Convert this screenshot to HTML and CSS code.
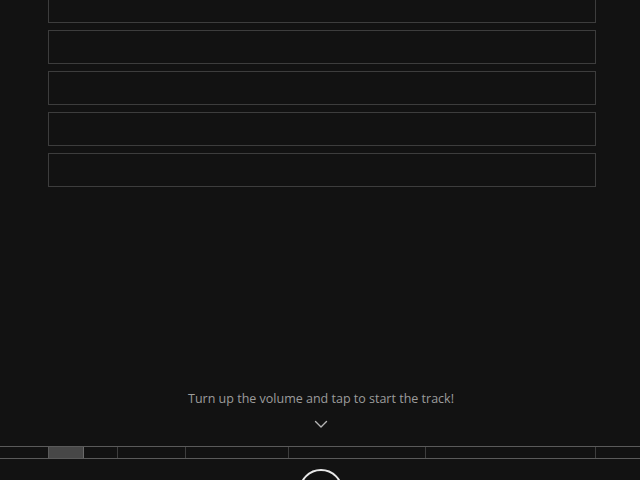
FILE: index.html
```html
<!DOCTYPE html>
<html lang="en">
<head>
<meta charset="utf-8">
<title>Track</title>
<link rel="stylesheet" href="styles.css">
</head>
<body>
<div class="screen">
  <div class="rows">
    <div class="row"></div>
    <div class="row"></div>
    <div class="row"></div>
    <div class="row"></div>
    <div class="row"></div>
  </div>
  <p class="prompt">Turn up the volume and tap to start the track!</p>
  <div class="chevron">
    <svg width="14" height="9" viewBox="0 0 14 9"><path d="M1.5 1.5 L7 7 L12.5 1.5" fill="none" stroke="#b5b5b5" stroke-width="1.4" stroke-linecap="round" stroke-linejoin="round"/></svg>
  </div>
  <div class="timeline">
    <div class="seg first" style="width:48px"></div>
    <div class="seg active" style="width:35px"></div>
    <div class="seg" style="width:34px"></div>
    <div class="seg" style="width:68px"></div>
    <div class="seg" style="width:103px"></div>
    <div class="seg" style="width:137px"></div>
    <div class="seg" style="width:170px"></div>
    <div class="seg rest"></div>
  </div>
  <div class="play"></div>
</div>
</body>
</html>
```

FILE: styles.css
```css
html, body {
  margin: 0;
  padding: 0;
  background: #121212;
}

.screen {
  width: 640px;
  height: 480px;
  overflow: hidden;
  display: flex;
  flex-direction: column;
  font-family: "Open Sans", "Noto Sans", sans-serif;
}

.rows {
  margin-top: -11px;
  padding: 0 44px 0 48px;
  display: flex;
  flex-direction: column;
  gap: 7px;
}

.row {
  height: 32px;
  border: 1px solid #3d3d3d;
}

.prompt {
  margin: 203px 0 0;
  height: 18px;
  line-height: 18px;
  font-size: 12.5px;
  color: #9c9c9c;
  text-align: center;
  padding-left: 2px;
}

.chevron {
  margin-top: 12px;
  height: 9px;
  display: flex;
  justify-content: center;
  padding-left: 2px;
}

.chevron svg {
  display: block;
}

.timeline {
  margin-top: 17px;
  height: 11px;
  border-top: 1px solid #5a5a5a;
  border-bottom: 1px solid #5a5a5a;
  display: flex;
  flex-shrink: 0;
}

.seg {
  flex-shrink: 0;
  border-left: 1px solid #3e3e3e;
  box-sizing: border-box;
}

.seg.first {
  border-left: none;
}

.seg.active {
  background: #474747;
  border-left-color: #5a5a5a;
}

.seg.active + .seg {
  border-left-color: #6a6a6a;
}

.seg.rest {
  flex: 1;
}

.play {
  margin: 10px auto 0;
  width: 40px;
  height: 40px;
  border: 2px solid #e8e8e8;
  border-radius: 50%;
  flex-shrink: 0;
  position: relative;
  left: 1px;
}
```
